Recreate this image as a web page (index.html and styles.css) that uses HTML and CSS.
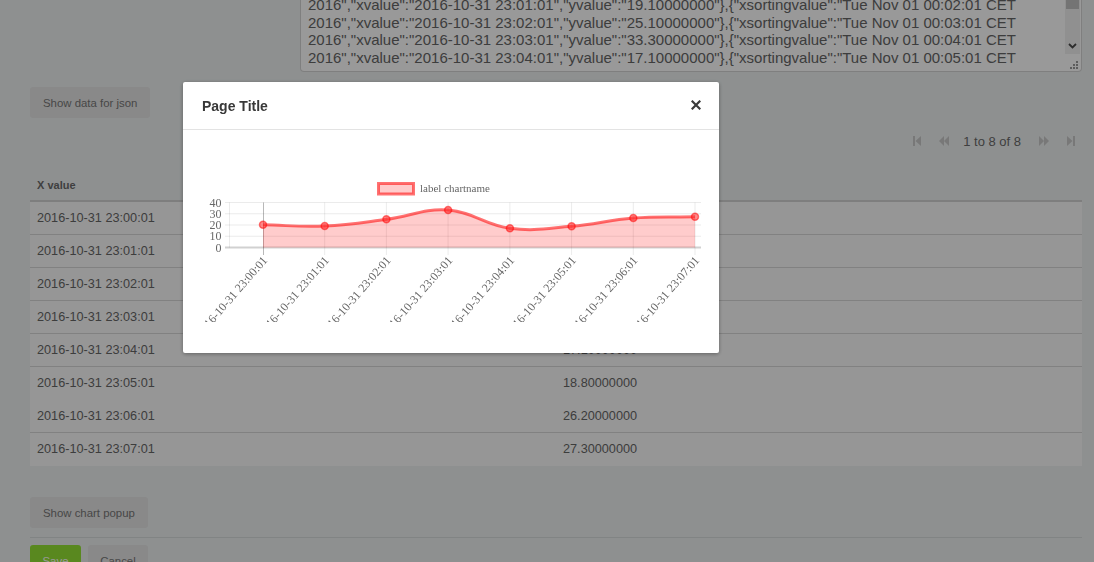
FILE: index.html
```html
<!DOCTYPE html>
<html>
<head>
<meta charset="utf-8">
<title>Chart popup</title>
<link rel="stylesheet" href="styles.css">
</head>
<body>
<div class="page">
  <div class="json-row">
    <div class="json-box">
      <div class="json-text">
        <div class="json-line">2016","xvalue":"2016-10-31 23:01:01","yvalue":"19.10000000"},{"xsortingvalue":"Tue Nov 01 00:02:01 CET</div>
        <div class="json-line">2016","xvalue":"2016-10-31 23:02:01","yvalue":"25.10000000"},{"xsortingvalue":"Tue Nov 01 00:03:01 CET</div>
        <div class="json-line">2016","xvalue":"2016-10-31 23:03:01","yvalue":"33.30000000"},{"xsortingvalue":"Tue Nov 01 00:04:01 CET</div>
        <div class="json-line">2016","xvalue":"2016-10-31 23:04:01","yvalue":"17.10000000"},{"xsortingvalue":"Tue Nov 01 00:05:01 CET</div>
      </div>
      <div class="scrollbar">
        <div class="thumb"></div>
        <svg class="arrow" width="9" height="6" viewBox="0 0 9 6"><path d="M1 1 L4.5 4.5 L8 1" fill="none" stroke="#4a4a4a" stroke-width="1.8"/></svg>
      </div>
      <svg class="grip" width="8" height="8" viewBox="0 0 8 8">
        <rect x="6" y="0" width="2" height="2" fill="#9a9a9a"/>
        <rect x="3" y="3" width="2" height="2" fill="#9a9a9a"/>
        <rect x="6" y="3" width="2" height="2" fill="#9a9a9a"/>
        <rect x="0" y="6" width="2" height="2" fill="#9a9a9a"/>
        <rect x="3" y="6" width="2" height="2" fill="#9a9a9a"/>
        <rect x="6" y="6" width="2" height="2" fill="#9a9a9a"/>
      </svg>
    </div>
  </div>

  <div class="btn-row">
    <button class="btn">Show data for json</button>
  </div>

  <div class="pager">
    <svg class="pg-icon first" width="8" height="10" viewBox="0 0 8 10"><rect x="0" y="0" width="2" height="10"/><polygon points="8,0 8,10 2.5,5"/></svg>
    <svg class="pg-icon prev" width="10" height="10" viewBox="0 0 10 10"><polygon points="5,0 5,10 0,5"/><polygon points="10,0 10,10 5,5"/></svg>
    <span class="pg-text">1 to 8 of 8</span>
    <svg class="pg-icon next" width="10" height="10" viewBox="0 0 10 10"><polygon points="0,0 0,10 5,5"/><polygon points="5,0 5,10 10,5"/></svg>
    <svg class="pg-icon last" width="8" height="10" viewBox="0 0 8 10"><polygon points="0,0 0,10 5.5,5"/><rect x="6" y="0" width="2" height="10"/></svg>
  </div>

  <div class="grid">
    <div class="grid-head">
      <div class="hcell">X value</div>
      <div class="hcell"></div>
    </div>
    <div class="grid-body">
      <div class="row"><div class="cell">2016-10-31 23:00:01</div><div class="cell">20.20000000</div></div>
      <div class="row"><div class="cell">2016-10-31 23:01:01</div><div class="cell">19.10000000</div></div>
      <div class="row"><div class="cell">2016-10-31 23:02:01</div><div class="cell">25.10000000</div></div>
      <div class="row"><div class="cell">2016-10-31 23:03:01</div><div class="cell">33.30000000</div></div>
      <div class="row"><div class="cell">2016-10-31 23:04:01</div><div class="cell">17.10000000</div></div>
      <div class="row no-line"><div class="cell">2016-10-31 23:05:01</div><div class="cell">18.80000000</div></div>
      <div class="row"><div class="cell">2016-10-31 23:06:01</div><div class="cell">26.20000000</div></div>
      <div class="row last"><div class="cell">2016-10-31 23:07:01</div><div class="cell">27.30000000</div></div>
    </div>
  </div>

  <div class="btn-row2">
    <button class="btn">Show chart popup</button>
  </div>

  <div class="footer">
    <button class="btn btn-save">Save</button>
    <button class="btn btn-cancel">Cancel</button>
  </div>
</div>

<div class="backdrop"></div>

<div class="modal">
  <div class="modal-head">
    <span class="modal-title">Page Title</span>
    <svg class="close" width="10" height="10" viewBox="0 0 10 10"><path d="M1.5 1.5 L8.5 8.5 M8.5 1.5 L1.5 8.5" stroke="#3a3a3a" stroke-width="2.2" stroke-linecap="square"/></svg>
  </div>
  <div class="modal-body">
    <svg class="chart" width="536" height="192" viewBox="0 0 536 192">
      <rect x="195.5" y="53.5" width="35" height="10.5" fill="rgba(255,0,0,0.2)" stroke="rgba(255,0,0,0.55)" stroke-width="3"/>
      <text x="237" y="62" class="legend-text">label chartname</text>

      <g stroke="rgba(0,0,0,0.08)" stroke-width="1">
        <line x1="42" y1="72.5" x2="518" y2="72.5"/>
        <line x1="42" y1="83.75" x2="518" y2="83.75"/>
        <line x1="42" y1="95" x2="518" y2="95"/>
        <line x1="42" y1="106.25" x2="518" y2="106.25"/>
        <line x1="46.5" y1="72.5" x2="46.5" y2="117.5"/>
      </g>
      <g stroke="rgba(0,0,0,0.08)" stroke-width="1">
        <line x1="141.7" y1="72.5" x2="141.7" y2="125"/>
        <line x1="203.4" y1="72.5" x2="203.4" y2="125"/>
        <line x1="265.1" y1="72.5" x2="265.1" y2="125"/>
        <line x1="326.9" y1="72.5" x2="326.9" y2="125"/>
        <line x1="388.6" y1="72.5" x2="388.6" y2="125"/>
        <line x1="450.3" y1="72.5" x2="450.3" y2="125"/>
        <line x1="512" y1="72.5" x2="512" y2="125"/>
      </g>
      <line x1="80.5" y1="72.5" x2="80.5" y2="125" stroke="rgba(0,0,0,0.28)" stroke-width="1"/>
      <line x1="42" y1="117.5" x2="518" y2="117.5" stroke="rgba(0,0,0,0.18)" stroke-width="2"/>

      <g class="axis-text" text-anchor="end">
        <text x="38.5" y="76.5">40</text>
        <text x="38.5" y="87.75">30</text>
        <text x="38.5" y="99">20</text>
        <text x="38.5" y="110.25">10</text>
        <text x="38.5" y="121.5">0</text>
      </g>

      <path d="M80,94.8 C104.68,95.28 117.09,97.10 141.7,96 C166.45,94.90 178.79,92.49 203.4,89.3 C228.15,86.09 240.80,78.23 265.1,80 C290.20,81.83 301.67,94.96 326.9,98.3 C351.07,101.50 364.03,98.40 388.6,96.35 C413.39,94.28 425.51,89.92 450.3,88 C474.87,86.10 487.32,87.28 512,86.8 L512,117.5 L80,117.5 Z" fill="rgba(255,0,0,0.2)"/>
      <path d="M80,94.8 C104.68,95.28 117.09,97.10 141.7,96 C166.45,94.90 178.79,92.49 203.4,89.3 C228.15,86.09 240.80,78.23 265.1,80 C290.20,81.83 301.67,94.96 326.9,98.3 C351.07,101.50 364.03,98.40 388.6,96.35 C413.39,94.28 425.51,89.92 450.3,88 C474.87,86.10 487.32,87.28 512,86.8" fill="none" stroke="rgba(255,0,0,0.55)" stroke-width="3"/>

      <g fill="rgba(255,40,40,0.55)" stroke="rgba(255,0,0,0.5)" stroke-width="1.5">
        <circle cx="80" cy="94.8" r="3.5"/>
        <circle cx="141.7" cy="96" r="3.5"/>
        <circle cx="203.4" cy="89.3" r="3.5"/>
        <circle cx="265.1" cy="80" r="3.5"/>
        <circle cx="326.9" cy="98.3" r="3.5"/>
        <circle cx="388.6" cy="96.35" r="3.5"/>
        <circle cx="450.3" cy="88" r="3.5"/>
        <circle cx="512" cy="86.8" r="3.5"/>
      </g>

      <g class="axis-text" text-anchor="end" dominant-baseline="central">
        <text transform="translate(82,128) rotate(-49)">2016-10-31 23:00:01</text>
        <text transform="translate(143.7,128) rotate(-49)">2016-10-31 23:01:01</text>
        <text transform="translate(205.4,128) rotate(-49)">2016-10-31 23:02:01</text>
        <text transform="translate(267.1,128) rotate(-49)">2016-10-31 23:03:01</text>
        <text transform="translate(328.9,128) rotate(-49)">2016-10-31 23:04:01</text>
        <text transform="translate(390.6,128) rotate(-49)">2016-10-31 23:05:01</text>
        <text transform="translate(452.3,128) rotate(-49)">2016-10-31 23:06:01</text>
        <text transform="translate(514,128) rotate(-49)">2016-10-31 23:07:01</text>
      </g>
    </svg>
  </div>
</div>
</body>
</html>
```

FILE: styles.css
```css
* { box-sizing: border-box; }

html, body {
  margin: 0;
  padding: 0;
  height: 100%;
  overflow: hidden;
}

body {
  background: #edf1f1;
  font-family: "Liberation Sans", Arial, sans-serif;
  color: #666;
}

.page {
  padding: 0 12px 0 30px;
}

/* json textarea (scrolled) */
.json-row {
  padding-left: 270px;
}

.json-box {
  position: relative;
  height: 72px;
  background: #fff;
  border: 1px solid #d4d4d4;
  border-top: none;
  border-radius: 0 0 4px 4px;
  overflow: hidden;
}

.json-text {
  margin-top: -4px;
  padding-left: 7px;
  font-size: 15px;
  line-height: 17.6px;
  color: #666;
}

.json-line {
  white-space: pre;
}

.scrollbar {
  position: absolute;
  top: 0;
  right: 1px;
  width: 15px;
  height: 54px;
  background: #f1f1f1;
}

.thumb {
  height: 9px;
  margin: 0 1px;
  background: #c1c1c1;
}

.arrow {
  position: absolute;
  left: 3px;
  top: 43px;
}

.grip {
  position: absolute;
  right: 3px;
  bottom: 2px;
}

/* buttons */
.btn {
  font-family: "Liberation Sans", Arial, sans-serif;
  font-size: 11.4px;
  color: #777;
  background: #e4e4e4;
  border: none;
  border-radius: 3px;
  height: 31px;
  padding: 0 13px;
  cursor: pointer;
}

.btn-row {
  margin-top: 15px;
  display: flex;
}

/* pager */
.pager {
  height: 28px;
  margin-top: 9px;
  display: flex;
  align-items: center;
  justify-content: flex-end;
  padding-right: 7px;
}

.pg-icon {
  fill: #c8c8c8;
}

.pg-icon.first { margin-right: 18px; }
.pg-icon.prev { margin-right: 14px; }
.pg-icon.next { margin-left: 18px; }
.pg-icon.last { margin-left: 18px; }

.pg-text {
  font-size: 13px;
  color: #6a6a6a;
}

/* grid */
.grid {
  margin-top: 14px;
}

.grid-head {
  display: grid;
  grid-template-columns: 526px 1fr;
  height: 33px;
  border-bottom: 2px solid #d2d2d2;
  align-items: center;
}

.hcell {
  padding-left: 7px;
  font-size: 11px;
  font-weight: bold;
  color: #6a6a6a;
}

.grid-body {
  background: #fbfbfb;
}

.row {
  display: grid;
  grid-template-columns: 526px 1fr;
  height: 33px;
  border-bottom: 1px solid #d8d8d8;
  align-items: center;
}

.row.no-line,
.row.last {
  border-bottom-color: transparent;
}

.cell {
  padding-left: 7px;
  font-size: 12.7px;
  color: #666;
}

.btn-row2 {
  margin-top: 31px;
  display: flex;
  padding-bottom: 9px;
  border-bottom: 1px solid #d8dcdc;
}

.footer {
  margin-top: 7px;
  display: flex;
  gap: 7px;
}

.btn-save {
  background: #95e335;
  color: #fff;
  width: 51px;
  padding: 0;
}

.btn-cancel {
  width: 60px;
  padding: 0;
}

/* modal */
.backdrop {
  position: fixed;
  inset: 0;
  background: rgba(0, 0, 0, 0.4);
}

.modal {
  position: fixed;
  left: 183px;
  top: 82px;
  width: 536px;
  background: #fff;
  border-radius: 2px;
  box-shadow: 0 1px 4px rgba(0, 0, 0, 0.35);
}

.modal-head {
  height: 48px;
  border-bottom: 1px solid #e3e3e3;
  display: flex;
  align-items: center;
  justify-content: space-between;
  padding: 0 18px 0 19px;
}

.modal-title {
  font-size: 14px;
  font-weight: bold;
  color: #383838;
}

.close {
  margin-top: -2px;
}

.modal-body {
  padding-bottom: 31px;
}

.chart {
  display: block;
}

.legend-text {
  font-family: "Liberation Serif", "Times New Roman", serif;
  font-size: 11px;
  fill: #666;
}

.axis-text {
  font-family: "Liberation Serif", "Times New Roman", serif;
  font-size: 12px;
  fill: #666;
}
```
